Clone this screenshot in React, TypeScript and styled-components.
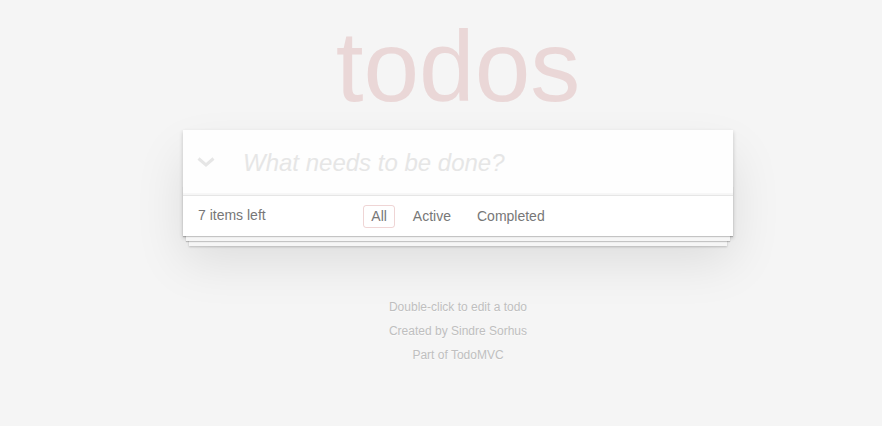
import styled, { createGlobalStyle } from 'styled-components';

// ─── Global ───────────────────────────────────────────────────────────────────

const GlobalStyle = createGlobalStyle`
  html, body {
    margin: 0;
    padding: 0;
  }
  body {
    background: #f5f5f5;
    color: #4d4d4d;
    font: 14px 'Liberation Sans', Arial, Helvetica, sans-serif;
    line-height: 1.4em;
  }
`;

// ─── Layout ───────────────────────────────────────────────────────────────────

const Page = styled.div`
  width: 550px;
  margin-left: 183px;
  padding-top: 16px;
`;

const Title = styled.h1`
  margin: 0 0 14px;
  font-size: 100px;
  line-height: 100px;
  font-weight: 100;
  text-align: center;
  color: rgba(175, 47, 47, 0.15);
`;

const TodoApp = styled.section`
  position: relative;
  background: #fff;
  box-shadow: 0 2px 4px 0 rgba(0, 0, 0, 0.2), 0 25px 50px 0 rgba(0, 0, 0, 0.1);
`;

// ─── Header / input ───────────────────────────────────────────────────────────

const Header = styled.header`
  position: relative;
`;

const ToggleAll = styled.span`
  position: absolute;
  left: 14px;
  top: 27px;
  width: 18px;
  height: 10px;
  display: flex;
  pointer-events: none;
`;

const NewTodo = styled.input`
  display: block;
  width: 100%;
  height: 65px;
  margin: 0;
  padding: 16px 16px 16px 60px;
  border: none;
  outline: none;
  box-sizing: border-box;
  background: rgba(0, 0, 0, 0.003);
  box-shadow: inset 0 -2px 1px rgba(0, 0, 0, 0.03);
  font-family: inherit;
  font-size: 24px;
  line-height: 1.4em;
  color: #4d4d4d;

  &::placeholder {
    font-style: italic;
    font-weight: 300;
    color: #e6e6e6;
  }
`;

// ─── Footer ───────────────────────────────────────────────────────────────────

const Footer = styled.footer`
  position: relative;
  height: 20px;
  padding: 10px 15px;
  border-top: 1px solid #e6e6e6;
  color: #777;
  display: flex;
  align-items: center;

  &::before {
    content: '';
    position: absolute;
    right: 0;
    bottom: 0;
    left: 0;
    height: 50px;
    overflow: hidden;
    box-shadow: 0 1px 1px rgba(0, 0, 0, 0.2),
      0 8px 0 -3px #f6f6f6,
      0 9px 1px -3px rgba(0, 0, 0, 0.2),
      0 16px 0 -6px #f6f6f6,
      0 17px 2px -6px rgba(0, 0, 0, 0.2);
  }
`;

const Count = styled.span`
  position: relative;
  z-index: 1;
`;

const Filters = styled.ul`
  position: absolute;
  left: 0;
  right: 0;
  margin: 0;
  padding: 0;
  list-style: none;
  display: flex;
  justify-content: center;
  gap: 4px;
  z-index: 1;
`;

const FilterLink = styled.a<{ $selected?: boolean }>`
  display: inline-block;
  margin: 3px;
  padding: 2px 7px 3px;
  line-height: 16px;
  color: inherit;
  text-decoration: none;
  border: 1px solid ${({ $selected }) => ($selected ? 'rgba(175, 47, 47, 0.2)' : 'transparent')};
  border-radius: 3px;
`;

// ─── Info ─────────────────────────────────────────────────────────────────────

const Info = styled.footer`
  margin-top: 65px;
  color: #bfbfbf;
  font-size: 12px;
  text-align: center;
  text-shadow: 0 1px 0 rgba(255, 255, 255, 0.5);

  p {
    margin: 12px 0;
    line-height: 1;
  }
  p:first-child {
    margin-top: 0;
  }
`;

const filters = [
  { label: 'All', selected: true },
  { label: 'Active' },
  { label: 'Completed' },
];

export default function App() {
  return (
    <>
      <GlobalStyle />
      <Page>
        <Title>todos</Title>
        <TodoApp>
          <Header>
            <ToggleAll>
              <svg width="18" height="10" viewBox="0 0 18 10">
                <polyline
                  points="1.5,1.5 9,8 16.5,1.5"
                  fill="none"
                  stroke="#e6e6e6"
                  strokeWidth="3"
                />
              </svg>
            </ToggleAll>
            <NewTodo placeholder="What needs to be done?" />
          </Header>
          <Footer>
            <Count>7 items left</Count>
            <Filters>
              {filters.map((f) => (
                <li key={f.label}>
                  <FilterLink href="#/" $selected={f.selected}>
                    {f.label}
                  </FilterLink>
                </li>
              ))}
            </Filters>
          </Footer>
        </TodoApp>
        <Info>
          <p>Double-click to edit a todo</p>
          <p>Created by Sindre Sorhus</p>
          <p>Part of TodoMVC</p>
        </Info>
      </Page>
    </>
  );
}
